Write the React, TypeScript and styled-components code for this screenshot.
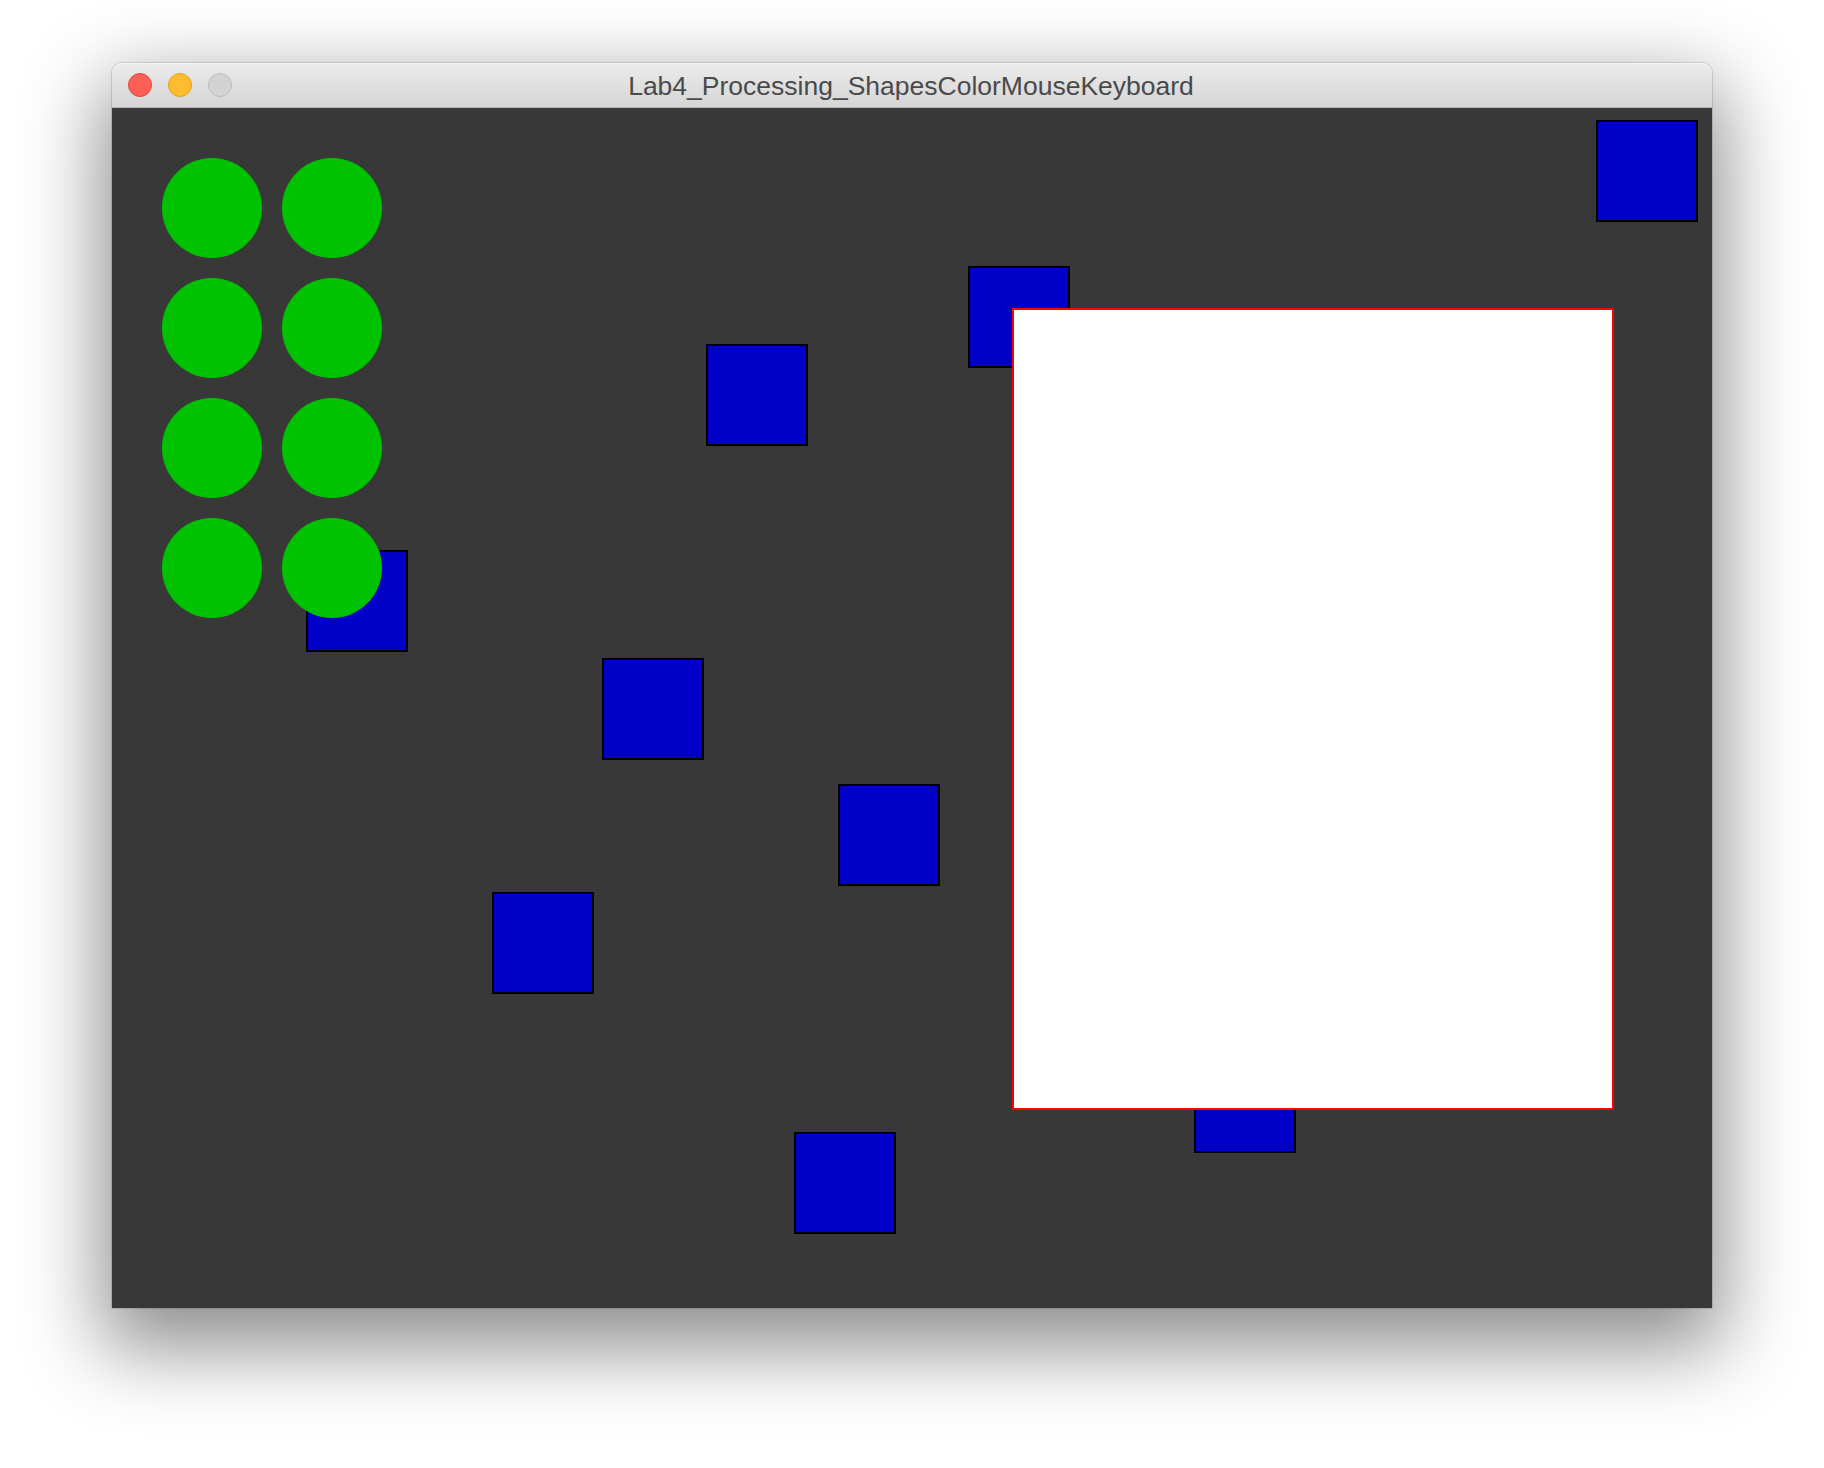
import * as React from "react";
import styled, { createGlobalStyle } from "styled-components";

const GlobalStyle = createGlobalStyle`
  html, body {
    margin: 0;
    padding: 0;
    background: #ffffff;
  }
`;

const Page = styled.div`
  width: 1824px;
  height: 1468px;
  padding: 63px 0 0 112px;
  box-sizing: border-box;
  overflow: hidden;
`;

const Window = styled.div`
  width: 1600px;
  display: flex;
  flex-direction: column;
  border-radius: 10px 10px 0 0;
  box-shadow: 0 30px 80px 10px rgba(0, 0, 0, 0.45), 0 0 0 1px rgba(0, 0, 0, 0.12);
`;

const TitleBar = styled.div`
  height: 45px;
  position: relative;
  display: flex;
  align-items: center;
  justify-content: center;
  padding-top: 3px;
  background: linear-gradient(#ececec, #d5d5d5);
  border-radius: 10px 10px 0 0;
  border-bottom: 1px solid #b4b4b4;
  box-sizing: border-box;
  box-shadow: inset 0 1px 0 #f6f6f6;
`;

const Lights = styled.div`
  position: absolute;
  left: 16px;
  top: 10px;
  display: flex;
  gap: 16px;
`;

const Light = styled.div<{ $fill: string; $edge: string }>`
  width: 24px;
  height: 24px;
  border-radius: 50%;
  box-sizing: border-box;
  background: ${(p) => p.$fill};
  border: 1px solid ${(p) => p.$edge};
`;

const Title = styled.span`
  font-family: "Liberation Sans", Arial, sans-serif;
  font-size: 26.5px;
  color: #4a4a4a;
  margin-left: -2px;
`;

const Canvas = styled.div`
  position: relative;
  height: 1200px;
  background: #383838;
  overflow: hidden;
`;

const Square = styled.div<{ $x: number; $y: number }>`
  position: absolute;
  left: ${(p) => p.$x}px;
  top: ${(p) => p.$y}px;
  width: 102px;
  height: 102px;
  box-sizing: border-box;
  background: #0000c8;
  border: 2px solid #000;
`;

const Dot = styled.div<{ $x: number; $y: number }>`
  position: absolute;
  left: ${(p) => p.$x}px;
  top: ${(p) => p.$y}px;
  width: 100px;
  height: 100px;
  border-radius: 50%;
  background: #00c200;
`;

const Panel = styled.div`
  position: absolute;
  left: 900px;
  top: 200px;
  width: 602px;
  height: 802px;
  box-sizing: border-box;
  background: #ffffff;
  border: 2px solid #ff0000;
`;

const squares = [
  [1484, 12],
  [856, 158],
  [594, 236],
  [194, 442],
  [490, 550],
  [726, 676],
  [380, 784],
  [1082, 943],
  [682, 1024],
];

const dots = [50, 170, 290, 410].flatMap((y) => [
  [50, y],
  [170, y],
]);

export default function App() {
  return (
    <Page>
      <GlobalStyle />
      <Window>
        <TitleBar>
          <Lights>
            <Light $fill="#fe5f57" $edge="#e2463f" />
            <Light $fill="#febc2e" $edge="#dea123" />
            <Light $fill="#d3d3d3" $edge="#bcbcbc" />
          </Lights>
          <Title>Lab4_Processing_ShapesColorMouseKeyboard</Title>
        </TitleBar>
        <Canvas>
          {squares.map(([x, y], i) => (
            <Square key={i} $x={x} $y={y} />
          ))}
          {dots.map(([x, y], i) => (
            <Dot key={i} $x={x} $y={y} />
          ))}
          <Panel />
        </Canvas>
      </Window>
    </Page>
  );
}
